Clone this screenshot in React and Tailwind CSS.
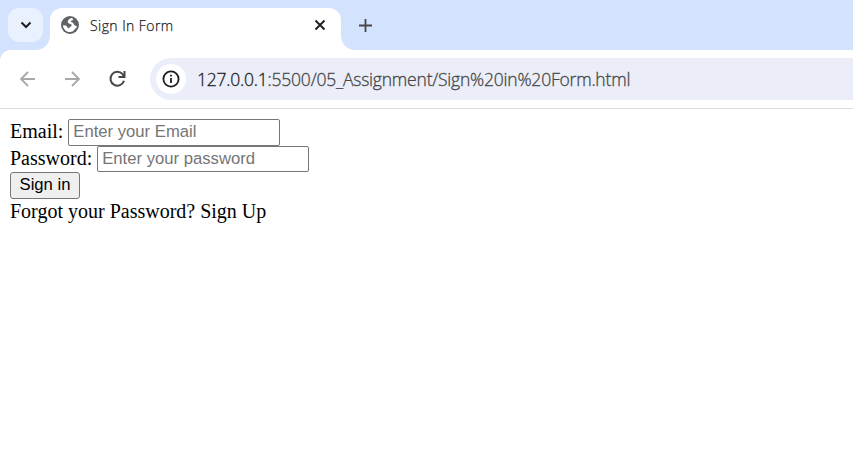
import React from "react";

function GlobeIcon() {
  return (
    <svg width="18" height="18" viewBox="0 0 18 18" className="shrink-0">
      <circle cx="9" cy="9" r="9" fill="#5f6368" />
      <path
        d="M10.8 2.1C9.3 2.3 8 3.1 7.3 4.3C6.5 5.3 6.6 6.3 7.3 7.1C8.1 8 9.5 7.6 10.3 8.4C11 9.2 10.7 10.3 9.7 10.6C8.6 10.9 8.9 12.1 7.8 12.2C6.2 12.3 6.5 10 5 9.4L2 9.2C2.1 13 5 16 9 16C11 16 12.5 15.2 13 14C13.5 12.8 15.8 12.6 15.9 10.2C15 9.7 14.5 9.9 13.5 9.2C12.4 8.4 12.8 7 11.5 6.6C10.4 6.3 9.5 6 10 5.1C10.4 4.4 11.6 4.8 12 3.7C12.2 3 11.5 2.4 10.8 2.1Z"
        fill="white"
      />
    </svg>
  );
}

function TabStrip() {
  return (
    <div className="flex h-[50px] bg-[#d3e3fd] pl-2">
      <button className="mt-2 flex h-[34px] w-[35px] shrink-0 items-center justify-center rounded-[11px] bg-[#e9f1fe]">
        <svg width="12" height="8" viewBox="0 0 12 8" fill="none" stroke="#1f1f1f" strokeWidth="2">
          <path d="M1.5 1.5L6 6L10.5 1.5" />
        </svg>
      </button>
      <svg width="15" height="15" viewBox="0 0 15 15" className="-ml-2 shrink-0 self-end">
        <path d="M15 0V15H0C9 15 15 9 15 0Z" fill="white" />
      </svg>
      <div className="mt-2 flex h-[42px] w-[291px] shrink-0 items-start rounded-t-[12px] bg-white pl-[11px] pr-[15px] pt-2">
        <GlobeIcon />
        <span className="ml-[11px] flex-1 whitespace-nowrap font-['Open_Sans',sans-serif] text-[14px] font-light leading-[20px] tracking-[0.43px] text-[#1f1f1f] [-webkit-text-stroke:0.25px]">
          Sign In Form
        </span>
        <svg width="12" height="12" viewBox="0 0 12 12" className="mt-[3px]" stroke="#1f1f1f" strokeWidth="1.9">
          <path d="M1.5 1.5L10.5 10.5M10.5 1.5L1.5 10.5" />
        </svg>
      </div>
      <svg width="15" height="15" viewBox="0 0 15 15" className="shrink-0 self-end">
        <path d="M0 0V15H15C6 15 0 9 0 0Z" fill="white" />
      </svg>
      <svg width="13" height="13" viewBox="0 0 13 13" className="ml-[3px] mt-[19px] shrink-0" stroke="#474747" strokeWidth="1.8">
        <path d="M6.5 0V13M0 6.5H13" />
      </svg>
    </div>
  );
}

function Toolbar() {
  return (
    <div className="bg-[#d3e3fd]">
      <div className="flex h-[59px] rounded-tl-[11px] border-b border-[#dedfe1] bg-white pl-5 pt-2">
        <svg width="16" height="16" viewBox="0 0 16 16" className="mt-[13px] shrink-0" fill="none" stroke="#a8a8a8" strokeWidth="1.8">
          <path d="M15 8H1.5M8 1L1 8L8 15" />
        </svg>
        <svg width="16" height="16" viewBox="0 0 16 16" className="ml-[28px] mt-[13px] shrink-0" fill="none" stroke="#a8a8a8" strokeWidth="1.8">
          <path d="M1 8H14.5M8 1L15 8L8 15" />
        </svg>
        <svg width="18" height="18" viewBox="0 0 18 18" className="ml-[28px] mt-[12px] shrink-0" fill="none" stroke="#474747" strokeWidth="2">
          <path d="M16 10.8A6.9 6.9 0 1 1 14.6 4.2L15.8 6" />
          <path d="M16.5 1V7H10.5" />
        </svg>
        <div className="ml-6 flex h-[42px] flex-1 items-center rounded-l-full bg-[#ebeef8] pl-[6px]">
          <div className="flex h-[30px] w-[30px] shrink-0 items-center justify-center rounded-full bg-white">
            <svg width="18" height="18" viewBox="0 0 18 18" fill="none" stroke="#1f1f1f">
              <circle cx="9" cy="9" r="7.6" strokeWidth="1.8" />
              <path d="M9 8V13M9 4.8V6.6" strokeWidth="1.8" />
            </svg>
          </div>
          <span className="ml-[11px] whitespace-nowrap font-['Open_Sans',sans-serif] text-[17.5px] font-light leading-[24px] tracking-[-0.21px] text-[#474747] [-webkit-text-stroke:0.3px]">
            <span className="text-[#1f1f1f]">127.0.0.1</span>:5500/05_Assignment/Sign%20in%20Form.html
          </span>
        </div>
      </div>
    </div>
  );
}

function SignInForm() {
  return (
    <form className="flex flex-col items-start pl-[10px] pt-[10px] font-['Liberation_Serif',serif] text-[20px] leading-[25px] text-black">
      <label className="flex h-[27px] gap-[5px]">
        Email:
        <input
          placeholder="Enter your Email"
          className="h-[27px] w-[212px] rounded-[2px] border border-[#767676] bg-white px-1 pb-[2px] font-['Liberation_Sans',sans-serif] text-[16.667px] placeholder:text-[#757575]"
        />
      </label>
      <label className="flex h-[26px] gap-[5px]">
        Password:
        <input
          placeholder="Enter your password"
          className="h-[26px] w-[212px] rounded-[2px] border border-[#767676] bg-white px-1 font-['Liberation_Sans',sans-serif] text-[16.667px] placeholder:text-[#757575]"
        />
      </label>
      <button
        type="button"
        className="flex h-[27px] w-[70px] items-center justify-center rounded-[3px] border border-[#767676] bg-[#efefef] pb-[2px] font-['Liberation_Sans',sans-serif] text-[16.667px] leading-[19px]"
      >
        Sign in
      </button>
      <p>Forgot your Password? Sign Up</p>
    </form>
  );
}

export default function App() {
  return (
    <div className="h-[451px] w-[853px] overflow-hidden bg-white">
      <TabStrip />
      <Toolbar />
      <SignInForm />
    </div>
  );
}
